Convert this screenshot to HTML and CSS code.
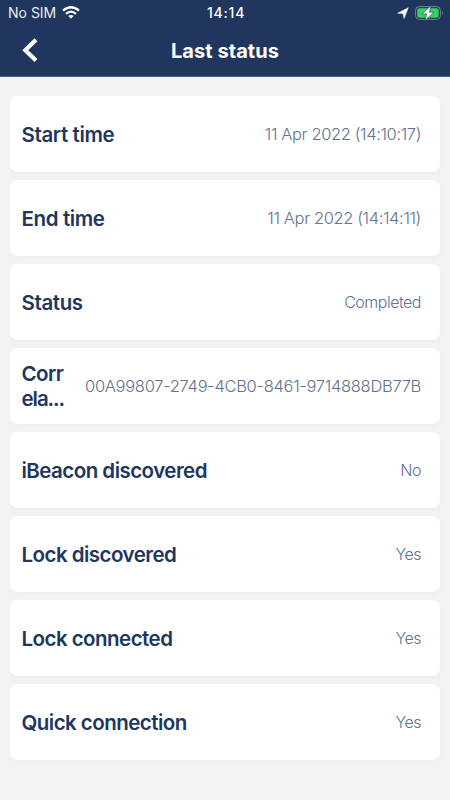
FILE: index.html
```
<!DOCTYPE html>
<html lang="en">
<head>
<meta charset="utf-8">
<title>Last status</title>
<link rel="stylesheet" href="styles.css">
</head>
<body>
<header class="header">
  <div class="statusbar">
    <div class="carrier"><span>No SIM</span>
      <svg class="wifi" width="18" height="13" viewBox="0 0 18 13"><g fill="none" stroke="#fff" stroke-width="2.2"><path d="M1 4.7Q9-2.2 17 4.7"/><path d="M4 7.9Q9 3.5 14 7.9"/></g><path d="M6.3 10.1Q9 7.8 11.7 10.1L9 12.8Z" fill="#fff"/></svg>
    </div>
    <div class="clock">14:14</div>
    <div class="indicators">
      <svg width="12" height="12" viewBox="0 0 12 12"><path d="M11.3.7 7 11.6 6.1 6.6.6 6.2Z" fill="#fff" stroke="#fff" stroke-width=".5" stroke-linejoin="round"/></svg>
      <svg width="29" height="16" viewBox="0 0 29 16"><rect x=".6" y="1.6" width="24.8" height="12.8" rx="3.8" fill="none" stroke="#78849c"/><rect x="2.3" y="3.3" width="21.4" height="9.4" rx="2.2" fill="#35d35c"/><path d="M27 5.5q1.8 2.5 0 5z" fill="#78849c"/><path d="M16 .6 7.2 8.9h4.6L10 15.4 19 7.2h-4.6Z" fill="#fff" stroke="#20365f" stroke-width=".6"/></svg>
    </div>
  </div>
  <div class="navbar">
    <svg class="back" width="20" height="28" viewBox="0 0 20 28"><path d="M16 3.8 5.3 14.2 16 24.6" fill="none" stroke="#fff" stroke-width="4.2"/></svg>
    <h1 class="title">Last status</h1>
  </div>
</header>
<main class="list">
  <div class="card"><span class="label short">Start time</span><span class="value date">11 Apr 2022 (14:10:17)</span></div>
  <div class="card"><span class="label short">End time</span><span class="value date">11 Apr 2022 (14:14:11)</span></div>
  <div class="card"><span class="label short">Status</span><span class="value">Completed</span></div>
  <div class="card"><span class="label">Corr<br><span class="clipped">ela...</span></span><span class="value identifier">00A99807-2749-4CB0-8461-9714888DB77B</span></div>
  <div class="card"><span class="label">iBeacon discovered</span><span class="value">No</span></div>
  <div class="card"><span class="label">Lock discovered</span><span class="value">Yes</span></div>
  <div class="card"><span class="label">Lock connected</span><span class="value">Yes</span></div>
  <div class="card"><span class="label">Quick connection</span><span class="value">Yes</span></div>
</main>
</body>
</html>
```
FILE: styles.css
```
* { box-sizing: border-box; }
body { margin: 0; min-height: 800px; background: #f3f3f3; font-family: Inter, "Liberation Sans", sans-serif; color: #20365f; }
.header { height: 77px; background: #20365f; color: #fff; border-bottom: 1px solid #4d5e7f; }
.statusbar { display: grid; grid-template-columns: 1fr auto 1fr; align-items: center; height: 25px; padding: 0 6px 0 8px; font-size: 14px; }
.carrier { display: flex; align-items: center; gap: 6px; color: #e9ebef; }
.clock { font-weight: 500; letter-spacing: .8px; }
.indicators { display: flex; justify-content: flex-end; align-items: center; gap: 6px; }
.navbar { display: grid; grid-template-columns: 60px 1fr 60px; align-items: center; height: 50px; }
.back { margin-left: 20px; }
.title { margin: 2px 0 0; text-align: center; font-size: 20px; font-weight: 700; letter-spacing: .05px; }
.list { display: flex; flex-direction: column; gap: 8px; padding: 19px 10px; }
.card { display: flex; align-items: center; justify-content: space-between; height: 76px; padding: 0 19px 0 11.5px; background: #fff; border-radius: 8px; box-shadow: 0 2px 6px rgba(0, 0, 0, .025); }
.label { font-size: 20.5px; line-height: 25px; font-weight: 600; letter-spacing: -.53px; white-space: nowrap; }
.short { letter-spacing: -.38px; }
.clipped { letter-spacing: -1.05px; }
.value { color: #63728f; font-size: 16px; font-weight: 300; letter-spacing: -.5px; white-space: nowrap; }
.date { font-size: 16.5px; letter-spacing: -.38px; }
.identifier { font-size: 16.5px; letter-spacing: -.3px; }
```
